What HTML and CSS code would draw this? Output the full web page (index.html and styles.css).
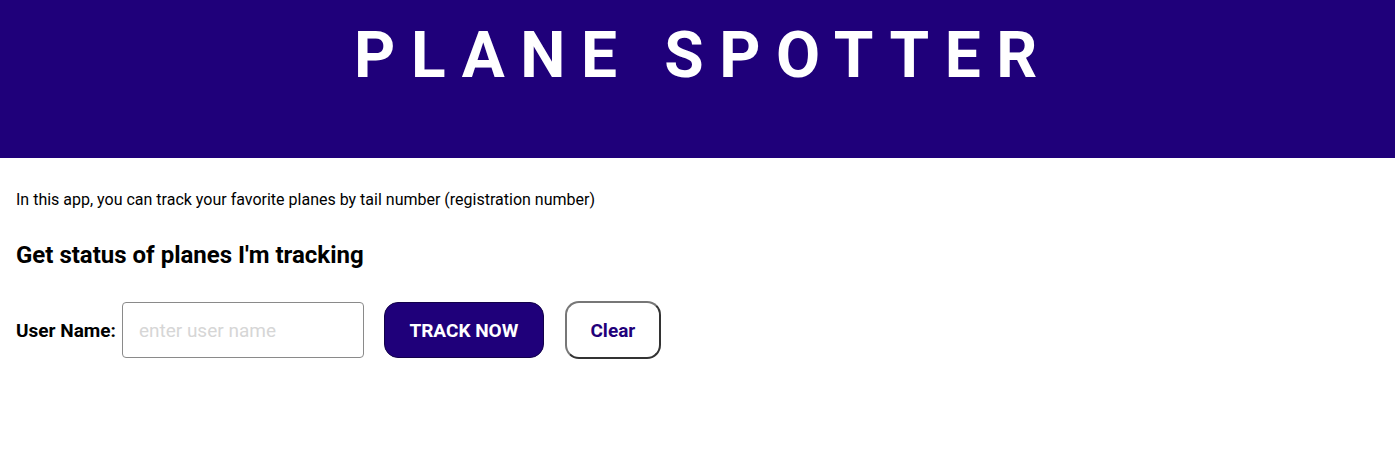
FILE: index.html
```html
<!DOCTYPE html>
<html>
<head>
<meta charset="utf-8">
<link rel="stylesheet" href="styles.css">
</head>
<body>
<header class="header">
  <h1 class="title">PLANE SPOTTER</h1>
</header>
<main class="content">
  <p class="intro">In this app, you can track your favorite planes by tail number (registration number)</p>
  <h2 class="subtitle">Get status of planes I'm tracking</h2>
  <form class="form">
    <label class="label" for="user">User Name:</label>
    <input class="input" id="user" type="text" placeholder="enter user name">
    <button class="btn btn-primary" type="button">TRACK NOW</button>
    <button class="btn btn-secondary" type="button">Clear</button>
  </form>
</main>
</body>
</html>
```
FILE: styles.css
```css
html, body {
  margin: 0;
  padding: 0;
  background: #fff;
  font-family: Roboto, "Liberation Sans", sans-serif;
  color: #000;
}
.header {
  background: #1f007a;
  height: 158px;
  box-sizing: border-box;
  padding-top: 18px;
}
.title {
  margin: 0;
  padding-left: 12px;
  text-align: center;
  color: #fff;
  font-size: 64px;
  font-weight: 700;
  letter-spacing: 15.6px;
  line-height: 75px;
}
.content {
  padding: 0 16px;
}
.intro {
  margin: 31px 0 0;
  font-size: 16px;
  line-height: 22px;
}
.subtitle {
  margin: 29px 0 0;
  font-size: 24px;
  font-weight: 700;
  line-height: 30px;
}
.form {
  display: flex;
  align-items: center;
  margin-top: 31px;
}
.label {
  font-size: 19px;
  font-weight: 700;
  margin-right: 6px;
}
.input {
  width: 242px;
  height: 56px;
  box-sizing: border-box;
  border: 1px solid #8a8a8a;
  border-radius: 4px;
  padding: 0 16px;
  font-family: inherit;
  font-size: 19px;
  margin-right: 20px;
}
.input::placeholder {
  color: #d6d6d6;
}
.btn {
  font-family: inherit;
  font-weight: 700;
  font-size: 19px;
  box-sizing: border-box;
  cursor: pointer;
}
.btn-primary {
  width: 160px;
  height: 56px;
  background: #1f007a;
  color: #fff;
  border: 1px solid #12004a;
  border-radius: 14px;
  margin-right: 21px;
}
.btn-secondary {
  width: 96px;
  height: 58px;
  background: #fff;
  color: #1f007a;
  border: 2px solid;
  border-color: #777 #333 #333 #777;
  border-radius: 14px;
}
```
